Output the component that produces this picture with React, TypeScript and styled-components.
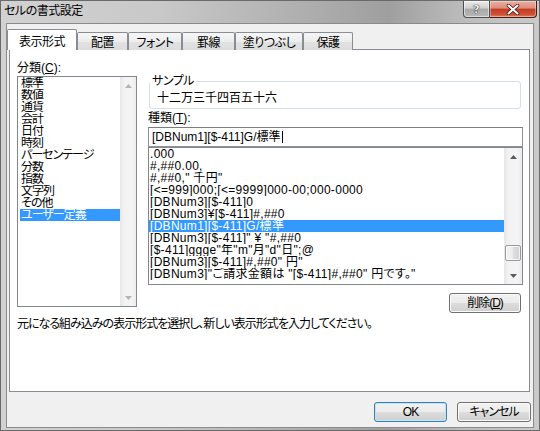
import React from 'react';
import styled, { createGlobalStyle } from 'styled-components';

const GlobalStyle = createGlobalStyle`
  html, body {
    margin: 0;
    padding: 0;
    background: #f0f0f0;
  }
  body {
    font-family: "Liberation Sans", "Noto Sans CJK JP", sans-serif;
    font-size: 12px;
    font-feature-settings: "palt";
    color: #000;
  }
`;

const Window = styled('div')({
  width: '540px',
  height: '431px',
  boxSizing: 'border-box',
  display: 'flex',
  flexDirection: 'column',
  border: '1px solid #6a6a6a',
  padding: '0 5px 2px',
  background:
    'linear-gradient(to right, #d2d2d2 0%, #c8c8c8 30%, #ababab 60%, #9f9f9f 72%, #bcbcbc 86%, #cacaca 100%)',
});

const TitleBar = styled('div')({
  height: '22px',
  flex: 'none',
  margin: '0 -5px',
  paddingLeft: '3px',
  display: 'flex',
  alignItems: 'flex-start',
  justifyContent: 'space-between',
});

const Title = styled('div')({
  paddingTop: '3px',
  fontSize: '12px',
  lineHeight: '14px',
  letterSpacing: '-0.5px',
  color: '#000',
});

const CaptionButtons = styled('div')({
  display: 'flex',
  marginRight: '2px',
});

const HelpButton = styled('div')({
  width: '27px',
  height: '17px',
  boxSizing: 'border-box',
  border: '1px solid #4e4e4e',
  borderTop: 'none',
  borderRadius: '0 0 0 4px',
  background: 'linear-gradient(#ececec, #cfcfcf 45%, #a8a8a8 50%, #b9b9b9 100%)',
  boxShadow: 'inset 0 0 0 1px rgba(255,255,255,0.5)',
  display: 'flex',
  alignItems: 'center',
  justifyContent: 'center',
  fontFamily: '"DejaVu Sans", sans-serif',
  fontWeight: 'bold',
  fontSize: '11px',
  color: '#f4f4f4',
  textShadow: '0 0 1px #000, 0 0 1px #000',
});

const CloseButton = styled('div')({
  width: '47px',
  height: '17px',
  boxSizing: 'border-box',
  border: '1px solid #4a1d14',
  borderTop: 'none',
  borderLeft: 'none',
  borderRadius: '0 0 4px 0',
  background: 'linear-gradient(#eab0a2, #dc8d7b 45%, #c33b20 50%, #cf5236 85%, #e0866b 100%)',
  boxShadow: 'inset 0 0 0 1px rgba(255,255,255,0.35)',
  display: 'flex',
  alignItems: 'center',
  justifyContent: 'center',
});

const Client = styled('div')({
  flex: 1,
  display: 'flex',
  flexDirection: 'column',
  background: '#f0f0f0',
  border: '1px solid #8a8a8a',
  padding: '5px 0',
});

const TabRow = styled('div')({
  height: '21px',
  display: 'flex',
  alignItems: 'flex-end',
  position: 'relative',
  zIndex: 1,
  marginBottom: '-1px',
});

const Tab = styled('div')(({ $active, $w }: { $active: boolean; $w: number }) => ({
  width: `${$w}px`,
  height: $active ? '21px' : '18px',
  boxSizing: 'border-box',
  border: '1px solid #898c95',
  borderBottom: 'none',
  borderRadius: '2px 2px 0 0',
  background: $active
    ? '#fff'
    : 'linear-gradient(#f6f6f6, #ededed 50%, #e2e2e2 50%, #dcdcdc 100%)',
  paddingTop: $active ? '6px' : '4px',
  textAlign: 'center',
  fontSize: '12px',
  lineHeight: '12px',
  letterSpacing: '-0.5px',
  whiteSpace: 'nowrap',
}));

const Panel = styled('div')({
  height: '343px',
  flex: 'none',
  boxSizing: 'border-box',
  margin: '0 3px 0 2px',
  border: '1px solid #898c95',
  background: '#fff',
  padding: '12px 5px 0 7px',
});

const PanelGrid = styled('div')({
  display: 'grid',
  gridTemplateColumns: '120px 1fr',
  columnGap: '11px',
  alignItems: 'start',
});

const Column = styled('div')({
  display: 'flex',
  flexDirection: 'column',
  minWidth: 0,
});

const FieldLabel = styled('div')(({ $top = 0 }: { $top?: number }) => ({
  fontSize: '12px',
  lineHeight: '12px',
  marginTop: `${$top}px`,
  whiteSpace: 'nowrap',
}));

const ListBox = styled('div')(
  ({ $h, $w, $top = 0 }: { $h: number; $w: number; $top?: number }) => ({
    width: `${$w}px`,
    height: `${$h}px`,
    marginTop: `${$top}px`,
    boxSizing: 'border-box',
    border: '1px solid #828790',
    background: '#fff',
    display: 'flex',
    overflow: 'hidden',
  })
);

const Items = styled('div')(({ $pad, $spacing }: { $pad: number; $spacing: number }) => ({
  flex: 1,
  minWidth: 0,
  paddingLeft: `${$pad}px`,
  overflow: 'hidden',
  letterSpacing: `${$spacing}px`,
}));

const Item = styled('div')(({ $selected }: { $selected: boolean }) => ({
  height: '12px',
  lineHeight: '12px',
  paddingLeft: '1px',
  fontSize: '12px',
  whiteSpace: 'nowrap',
  overflow: 'hidden',
  background: $selected ? '#3399ff' : 'transparent',
  color: $selected ? '#fff' : '#000',
}));

const ScrollBar = styled('div')(({ $w }: { $w: number }) => ({
  width: `${$w}px`,
  flex: 'none',
  display: 'flex',
  flexDirection: 'column',
  background: 'linear-gradient(to right, #e6e6e6, #f2f2f2 25%, #f4f4f4 75%, #ececec)',
}));

const ArrowButton = styled('div')({
  height: '17px',
  flex: 'none',
  display: 'flex',
  alignItems: 'center',
  justifyContent: 'center',
});

const Track = styled('div')({
  flex: 1,
  display: 'flex',
  flexDirection: 'column',
});

const Thumb = styled('div')(({ $offset }: { $offset: number }) => ({
  height: '16px',
  marginTop: `${$offset}px`,
  marginLeft: '1px',
  marginRight: '1px',
  boxSizing: 'border-box',
  border: '1px solid #9a9a9a',
  borderRadius: '2px',
  background: 'linear-gradient(to right, #f4f4f4, #ececec 45%, #dcdcdc 55%, #d3d3d3)',
  boxShadow: 'inset 0 0 0 1px rgba(255,255,255,0.7)',
}));

const SampleGroup = styled('fieldset')({
  margin: '13px 3px 0 1px',
  padding: '0 0 4px 0',
  border: '1px solid #d5dfe5',
  borderRadius: '3px',
  minWidth: 0,
});

const GroupLegend = styled('legend')({
  padding: '0 2px',
  fontSize: '12px',
  lineHeight: '12px',
  letterSpacing: '-0.5px',
});

const SampleValue = styled('div')({
  margin: '5px 0 0 7px',
  fontSize: '12px',
  lineHeight: '12px',
});

const TextInput = styled('div')({
  width: '375px',
  height: '20px',
  marginTop: '3px',
  boxSizing: 'border-box',
  border: '1px solid #8e9196',
  borderTopColor: '#7a7d83',
  padding: '3px 3px 0',
  fontSize: '12px',
  lineHeight: '12px',
  whiteSpace: 'nowrap',
  background: '#fff',
});

const Caret = styled('span')({
  display: 'inline-block',
  width: '1px',
  height: '12px',
  background: '#000',
  verticalAlign: 'top',
  marginLeft: '1px',
});

const ButtonRow = styled('div')(({ $top = 0, $right = 0 }: { $top?: number; $right?: number }) => ({
  display: 'flex',
  justifyContent: 'flex-end',
  gap: '10px',
  paddingTop: `${$top}px`,
  paddingRight: `${$right}px`,
}));

const PushButton = styled('div')(({ $w, $default = false }: { $w: number; $default?: boolean }) => ({
  width: `${$w}px`,
  height: '20px',
  boxSizing: 'border-box',
  border: `1px solid ${$default ? '#3c7fb1' : '#707070'}`,
  borderRadius: '3px',
  background: 'linear-gradient(#f2f2f2, #ebebeb 50%, #dddddd 50%, #cfcfcf)',
  boxShadow: $default ? 'inset 0 0 0 1px #bde4f8' : 'inset 0 0 0 1px #fbfbfb',
  display: 'flex',
  alignItems: 'center',
  justifyContent: 'center',
  fontSize: '12px',
  lineHeight: '12px',
  letterSpacing: '-1px',
}));

const Description = styled('div')({
  marginTop: '5px',
  fontSize: '12px',
  lineHeight: '12px',
  letterSpacing: '-1px',
  whiteSpace: 'nowrap',
});

const Glyph = ({ up, color }: { up: boolean; color: string }) => (
  <svg width="7" height="4" viewBox="0 0 7 4">
    <polygon points={up ? '0,4 3.5,0 7,4' : '0,0 7,0 3.5,4'} fill={color} />
  </svg>
);

const tabs = [
  { name: '表示形式', w: 70 },
  { name: '配置', w: 51 },
  { name: 'フォント', w: 54 },
  { name: '罫線', w: 53 },
  { name: '塗りつぶし', w: 68 },
  { name: '保護', w: 50 },
];

const categories = [
  '標準',
  '数値',
  '通貨',
  '会計',
  '日付',
  '時刻',
  'パーセンテージ',
  '分数',
  '指数',
  '文字列',
  'その他',
  'ユーザー定義',
];

const formats = [
  '.000',
  '#,##0.00,',
  '#,##0," 千円"',
  '[<=999]000;[<=9999]000-00;000-0000',
  '[DBNum3][$-411]0',
  '[DBNum3]¥[$-411]#,##0',
  '[DBNum1][$-411]G/標準',
  '[DBNum3][$-411]" ¥ "#,##0',
  '[$-411]ggge"年"m"月"d"日";@',
  '[DBNum3][$-411]#,##0" 円"',
  '[DBNum3]"ご請求金額は "[$-411]#,##0" 円です。"',
];

const App = (): JSX.Element => {
  return (
    <>
      <GlobalStyle />
      <Window>
        <TitleBar>
          <Title>セルの書式設定</Title>
          <CaptionButtons>
            <HelpButton>?</HelpButton>
            <CloseButton>
              <svg width="14" height="11" viewBox="0 0 14 11">
                <path d="M2.5 1.5 L11.5 9.5 M11.5 1.5 L2.5 9.5" stroke="#3a1a12" strokeWidth="3.6" strokeLinecap="round" />
                <path d="M2.5 1.5 L11.5 9.5 M11.5 1.5 L2.5 9.5" stroke="#fff" strokeWidth="2" strokeLinecap="round" />
              </svg>
            </CloseButton>
          </CaptionButtons>
        </TitleBar>
        <Client>
          <TabRow>
            {tabs.map((t, i) => (
              <Tab key={t.name} $active={i === 0} $w={t.w}>
                {t.name}
              </Tab>
            ))}
          </TabRow>
          <Panel>
            <PanelGrid>
              <Column>
                <FieldLabel>
                  分類(<u>C</u>):
                </FieldLabel>
                <ListBox $w={120} $h={231} $top={2}>
                  <Items $pad={2} $spacing={-1}>
                    {categories.map((c, i) => (
                      <Item key={c} $selected={i === categories.length - 1}>
                        {c}
                      </Item>
                    ))}
                  </Items>
                  <ScrollBar $w={16}>
                    <ArrowButton>
                      <Glyph up color="#b4b4b4" />
                    </ArrowButton>
                    <Track />
                    <ArrowButton>
                      <Glyph up={false} color="#b4b4b4" />
                    </ArrowButton>
                  </ScrollBar>
                </ListBox>
              </Column>
              <Column>
                <SampleGroup>
                  <GroupLegend>サンプル</GroupLegend>
                  <SampleValue>十二万三千四百五十六</SampleValue>
                </SampleGroup>
                <FieldLabel $top={3}>
                  種類(<u>T</u>):
                </FieldLabel>
                <TextInput>
                  [DBNum1][$-411]G/標準
                  <Caret />
                </TextInput>
                <ListBox $w={375} $h={138}>
                  <Items $pad={0} $spacing={0.3}>
                    {formats.map((f, i) => (
                      <Item key={f} $selected={i === 6}>
                        {f}
                      </Item>
                    ))}
                  </Items>
                  <ScrollBar $w={18}>
                    <ArrowButton>
                      <Glyph up color="#5a5a5a" />
                    </ArrowButton>
                    <Track>
                      <Thumb $offset={80} />
                    </Track>
                    <ArrowButton>
                      <Glyph up={false} color="#5a5a5a" />
                    </ArrowButton>
                  </ScrollBar>
                </ListBox>
                <ButtonRow $top={8} $right={3}>
                  <PushButton $w={72}>
                    削除(<u>D</u>)
                  </PushButton>
                </ButtonRow>
              </Column>
            </PanelGrid>
            <Description>
              元になる組み込みの表示形式を選択し、新しい表示形式を入力してください。
            </Description>
          </Panel>
          <ButtonRow $top={10} $right={2}>
            <PushButton $w={73} $default>
              OK
            </PushButton>
            <PushButton $w={74}>キャンセル</PushButton>
          </ButtonRow>
        </Client>
      </Window>
    </>
  );
};

export default App;
